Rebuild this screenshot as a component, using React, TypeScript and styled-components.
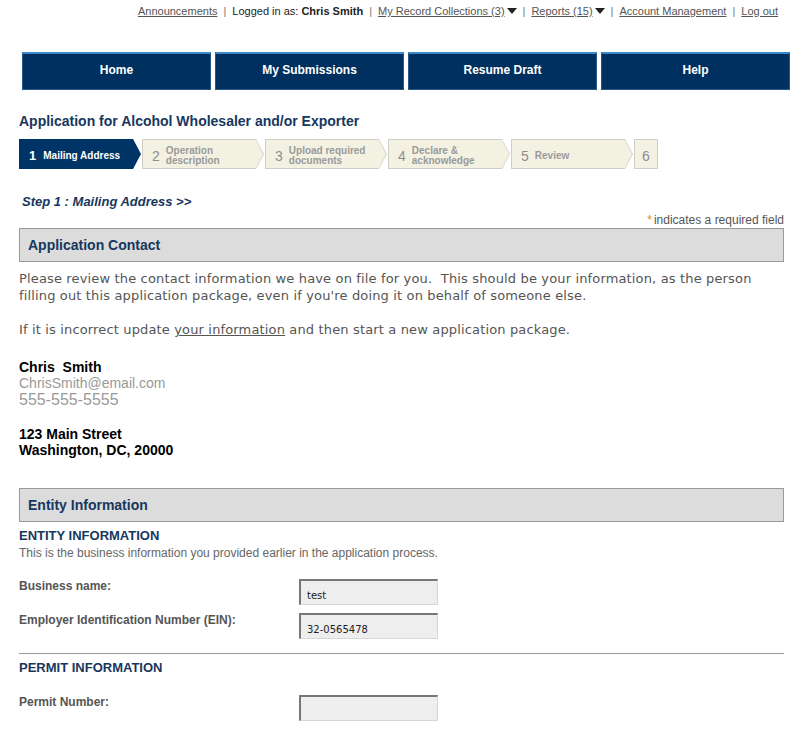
import React from "react";
import styled, { createGlobalStyle } from "styled-components";

const GlobalStyle = createGlobalStyle`
  html, body { margin: 0; padding: 0; background: #fff; }
  body { font-family: "Liberation Sans", Arial, sans-serif; }
  * { box-sizing: border-box; }
`;

const Page = styled.div`
  width: 784px;
  padding: 4px 0 30px 19px;
`;

const TopBar = styled.div`
  display: flex;
  justify-content: flex-end;
  align-items: center;
  padding-right: 6px;
  height: 14px;
  font-size: 11px;
  line-height: 14px;
  color: #222;
  white-space: nowrap;
`;

const TopLink = styled.a`
  color: #555;
  text-decoration: underline;
`;

const Sep = styled.span`
  color: #777;
  margin: 0 6px;
`;

const Caret = styled.span`
  display: inline-block;
  width: 0;
  height: 0;
  border-left: 5px solid transparent;
  border-right: 5px solid transparent;
  border-top: 6px solid #222;
  margin-left: 2px;
  vertical-align: 1px;
`;

const Nav = styled.nav`
  display: grid;
  grid-template-columns: repeat(4, 189px);
  gap: 4px;
  margin: 34px 0 0 3px;
  width: 768px;
`;

const NavButton = styled.a`
  height: 38px;
  display: flex;
  align-items: center;
  justify-content: center;
  padding-bottom: 3px;
  background: #003060;
  border: 1px solid #25598a;
  border-top: 2px solid #3c88cc;
  color: #fff;
  font-weight: bold;
  font-size: 12px;
  text-decoration: none;
`;

const Title = styled.h1`
  margin: 23px 0 0;
  font-size: 14px;
  line-height: 17px;
  font-weight: bold;
  color: #17375e;
`;

const Steps = styled.div`
  display: flex;
  gap: 1px;
  margin-top: 9px;
  height: 30px;
`;

const chevron = (d: number) =>
  `polygon(0 0, calc(100% - ${d}px) 0, 100% 50%, calc(100% - ${d}px) 100%, 0 100%)`;

const StepOuter = styled.div<{ $active?: boolean; $last?: boolean }>`
  width: ${(p) => (p.$last ? 24 : 122)}px;
  height: 30px;
  padding: 1px;
  display: flex;
  background: ${(p) => (p.$active ? "#003366" : "#cfcfc6")};
  clip-path: ${(p) => (p.$last ? "none" : chevron(8))};
`;

const StepInner = styled.div<{ $active?: boolean; $last?: boolean }>`
  flex: 1;
  display: flex;
  align-items: center;
  justify-content: ${(p) => (p.$last ? "center" : "flex-start")};
  padding-left: ${(p) => (p.$last ? 0 : 9)}px;
  padding-top: 3px;
  background: ${(p) => (p.$active ? "#003366" : "#f3f1e2")};
  clip-path: ${(p) => (p.$last ? "none" : chevron(7))};
  color: ${(p) => (p.$active ? "#fff" : "#9a9a9a")};
`;

const StepNum = styled.span<{ $active?: boolean }>`
  font-size: ${(p) => (p.$active ? 13 : 14)}px;
  font-weight: ${(p) => (p.$active ? "bold" : "normal")};
  color: ${(p) => (p.$active ? "#fff" : "#8e8e8e")};
  margin-right: ${(p) => (p.$active ? 7 : 6)}px;
`;

const StepLabel = styled.span`
  font-size: 10px;
  line-height: 10px;
  font-weight: bold;
  white-space: pre;
`;

const StepHeading = styled.div`
  margin-top: 25px;
  padding-left: 3px;
  font-size: 13px;
  line-height: 16px;
  font-weight: bold;
  font-style: italic;
  color: #17375e;
`;

const Required = styled.div`
  margin-top: 4px;
  text-align: right;
  font-size: 12px;
  line-height: 13px;
  color: #555;
`;

const Star = styled.span`
  color: #e08a1e;
  margin-right: 2px;
`;

const SectionHeader = styled.div<{ $top: number }>`
  margin-top: ${(p) => p.$top}px;
  height: 34px;
  display: flex;
  align-items: center;
  padding-left: 8px;
  padding-bottom: 1px;
  background: #dcdcdc;
  border: 1px solid #9a9a9a;
  font-size: 14px;
  font-weight: bold;
  color: #17375e;
`;

const Para = styled.p<{ $top: number }>`
  margin: ${(p) => p.$top}px 0 0;
  font-family: "DejaVu Sans", Verdana, sans-serif;
  font-size: 13px;
  line-height: 17px;
  color: #555;
  letter-spacing: 0.15px;
`;

const InlineLink = styled.a`
  color: #555;
  text-decoration: underline;
`;

const Contact = styled.div<{ $top: number }>`
  margin-top: ${(p) => p.$top}px;
  display: flex;
  flex-direction: column;
`;

const ContactLine = styled.div<{ $size?: number; $bold?: boolean; $muted?: boolean }>`
  font-size: ${(p) => p.$size ?? 14}px;
  line-height: ${(p) => ((p.$size ?? 14) > 14 ? 18 : 16)}px;
  font-weight: ${(p) => (p.$bold ? "bold" : "normal")};
  color: ${(p) => (p.$muted ? "#999" : "#000")};
  white-space: pre;
`;

const SubHeading = styled.h2<{ $top: number }>`
  margin: ${(p) => p.$top}px 0 0;
  font-size: 13px;
  line-height: 16px;
  font-weight: bold;
  color: #17375e;
`;

const Hint = styled.div`
  margin-top: 1px;
  font-size: 12px;
  line-height: 16px;
  color: #666;
`;

const Form = styled.div<{ $top: number }>`
  margin-top: ${(p) => p.$top}px;
  display: flex;
  flex-direction: column;
  gap: 8px;
`;

const FieldRow = styled.div`
  display: grid;
  grid-template-columns: 280px 139px;
  align-items: start;
`;

const FieldLabel = styled.label`
  font-size: 12px;
  line-height: 14px;
  font-weight: bold;
  color: #555;
`;

const FieldInput = styled.input`
  width: 139px;
  height: 26px;
  padding: 5px 6px 0;
  background: #eeeeee;
  border: 1px solid #d6d6d6;
  border-top: 2px solid #777;
  border-left: 2px solid #777;
  font-family: "DejaVu Sans", Verdana, sans-serif;
  font-size: 10px;
  color: #222;
  outline: none;
`;

const Rule = styled.hr`
  margin: 14px 0 0;
  border: 0;
  border-top: 1px solid #999;
  height: 0;
`;

const steps = [
  { n: "1", label: "Mailing Address" },
  { n: "2", label: "Operation\ndescription" },
  { n: "3", label: "Upload required\ndocuments" },
  { n: "4", label: "Declare &\nacknowledge" },
  { n: "5", label: "Review" },
];

export default function App() {
  return (
    <>
      <GlobalStyle />
      <Page>
        <TopBar>
          <TopLink href="#">Announcements</TopLink>
          <Sep>|</Sep>
          <span>
            Logged in as: <b>Chris Smith</b>
          </span>
          <Sep>|</Sep>
          <TopLink href="#">My Record Collections (3)</TopLink>
          <Caret />
          <Sep>|</Sep>
          <TopLink href="#">Reports (15) </TopLink>
          <Caret />
          <Sep>|</Sep>
          <TopLink href="#">Account Management</TopLink>
          <Sep>|</Sep>
          <TopLink href="#">Log out</TopLink>
        </TopBar>

        <Nav>
          <NavButton href="#">Home</NavButton>
          <NavButton href="#">My Submissions</NavButton>
          <NavButton href="#">Resume Draft</NavButton>
          <NavButton href="#">Help</NavButton>
        </Nav>

        <Title>Application for Alcohol Wholesaler and/or Exporter</Title>

        <Steps>
          {steps.map((s, i) => {
            const active = i === 0;
            return (
              <StepOuter key={s.n} $active={active}>
                <StepInner $active={active}>
                  <StepNum $active={active}>{s.n}</StepNum>
                  <StepLabel>{s.label}</StepLabel>
                </StepInner>
              </StepOuter>
            );
          })}
          <StepOuter $last>
            <StepInner $last>
              <StepNum style={{ marginRight: 0 }}>6</StepNum>
            </StepInner>
          </StepOuter>
        </Steps>

        <StepHeading>Step 1 : Mailing Address &gt;&gt;</StepHeading>
        <Required>
          <Star>*</Star>indicates a required field
        </Required>

        <SectionHeader $top={1}>Application Contact</SectionHeader>
        <Para $top={8}>
          Please review the contact information we have on file for you.&nbsp; This should be your
          information, as the person filling out this application package, even if you're doing it
          on behalf of someone else.
        </Para>
        <Para $top={17}>
          If it is incorrect update <InlineLink href="#">your information</InlineLink> and then start a
          new application package.
        </Para>

        <Contact $top={21}>
          <ContactLine $bold>{"Chris  Smith"}</ContactLine>
          <ContactLine $muted>ChrisSmith@email.com</ContactLine>
          <ContactLine $muted $size={16}>555-555-5555</ContactLine>
        </Contact>
        <Contact $top={17}>
          <ContactLine $bold>123 Main Street</ContactLine>
          <ContactLine $bold>Washington, DC, 20000</ContactLine>
        </Contact>

        <SectionHeader $top={30}>Entity Information</SectionHeader>
        <SubHeading $top={6}>ENTITY INFORMATION</SubHeading>
        <Hint>This is the business information you provided earlier in the application process.</Hint>

        <Form $top={18}>
          <FieldRow>
            <FieldLabel>Business name:</FieldLabel>
            <FieldInput readOnly value="test" />
          </FieldRow>
          <FieldRow>
            <FieldLabel>Employer Identification Number (EIN):</FieldLabel>
            <FieldInput readOnly value="32-0565478" />
          </FieldRow>
        </Form>

        <Rule />
        <SubHeading $top={6}>PERMIT INFORMATION</SubHeading>
        <Form $top={19}>
          <FieldRow>
            <FieldLabel>Permit Number:</FieldLabel>
            <FieldInput readOnly value="" />
          </FieldRow>
        </Form>
      </Page>
    </>
  );
}
